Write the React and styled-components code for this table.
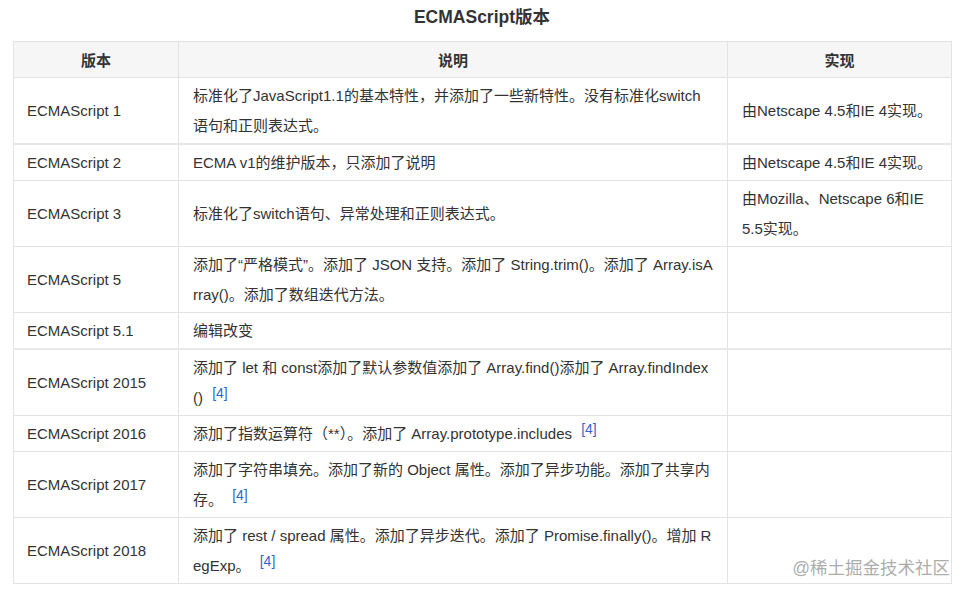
import styled, { createGlobalStyle } from "styled-components";

const GlobalStyle = createGlobalStyle`
  html, body {
    margin: 0;
    padding: 0;
    background: #fff;
  }
  body {
    font-family: "Liberation Sans", Arial, "Noto Sans CJK SC", sans-serif;
    color: #333;
  }
`;

const rows = [
  {
    version: "ECMAScript 1",
    desc: ["标准化了JavaScript1.1的基本特性，并添加了一些新特性。没有标准化switch", "语句和正则表达式。"],
    impl: ["由Netscape 4.5和IE 4实现。"],
  },
  {
    version: "ECMAScript 2",
    desc: ["ECMA v1的维护版本，只添加了说明"],
    impl: ["由Netscape 4.5和IE 4实现。"],
    seam: true,
  },
  {
    version: "ECMAScript 3",
    desc: ["标准化了switch语句、异常处理和正则表达式。"],
    impl: ["由Mozilla、Netscape 6和IE", "5.5实现。"],
  },
  {
    version: "ECMAScript 5",
    desc: ["添加了“严格模式”。添加了 JSON 支持。添加了 String.trim()。添加了 Array.isA", "rray()。添加了数组迭代方法。"],
  },
  {
    version: "ECMAScript 5.1",
    desc: ["编辑改变"],
  },
  {
    version: "ECMAScript 2015",
    desc: ["添加了 let 和 const添加了默认参数值添加了 Array.find()添加了 Array.findIndex", "()"],
    note: true,
    seam: true,
  },
  {
    version: "ECMAScript 2016",
    desc: ["添加了指数运算符（**）。添加了 Array.prototype.includes"],
    note: true,
  },
  {
    version: "ECMAScript 2017",
    desc: ["添加了字符串填充。添加了新的 Object 属性。添加了异步功能。添加了共享内", "存。"],
    note: true,
  },
  {
    version: "ECMAScript 2018",
    desc: ["添加了 rest / spread 属性。添加了异步迭代。添加了 Promise.finally()。增加 R", "egExp。"],
    note: true,
  },
];

function Lines({ lines, note }) {
  return lines.map((line, i) => (
    <span key={i}>
      {i > 0 && <br />}
      {line}
      {note && i === lines.length - 1 && (
        <>
          {" "}
          <Ref>[4]</Ref>
        </>
      )}
    </span>
  ));
}

export default function App() {
  return (
    <>
      <GlobalStyle />
      <Page>
        <Title>ECMAScript版本</Title>
        <Table>
          <colgroup>
            <col style={{ width: 165 }} />
            <col style={{ width: 549 }} />
            <col style={{ width: 224 }} />
          </colgroup>
          <thead>
            <tr>
              <Th>版本</Th>
              <Th>说明</Th>
              <Th>实现</Th>
            </tr>
          </thead>
          <tbody>
            {rows.map((r) => (
              <Row key={r.version} $seam={r.seam}>
                <Td>{r.version}</Td>
                <Td>
                  <Lines lines={r.desc} note={r.note} />
                </Td>
                <Td>{r.impl && <Lines lines={r.impl} />}</Td>
              </Row>
            ))}
          </tbody>
        </Table>
        <Watermark>@稀土掘金技术社区</Watermark>
      </Page>
    </>
  );
}

const Page = styled.div`
  position: relative;
  width: 968px;
  height: 595px;
  padding: 0 17px 0 13px;
  box-sizing: border-box;
  overflow: hidden;
`;

const Title = styled.h3`
  margin: 0;
  height: 41px;
  line-height: 34px;
  text-align: center;
  font-size: 17.5px;
  font-weight: bold;
  color: #333;
`;

const Table = styled.table`
  width: 938px;
  border-collapse: collapse;
  table-layout: fixed;
  font-size: 15px;
  border: 1px solid #e3e3e3;
`;

const Th = styled.th`
  height: 35px;
  padding: 0 14px;
  background: #f6f6f6;
  border: 1px solid #e3e3e3;
  font-weight: bold;
  font-size: 15px;
  color: #333;
  text-align: center;
  vertical-align: middle;
`;

const Row = styled.tr`
  border-top: ${(p) => (p.$seam ? "2px solid #e8e8e8" : "1px solid #e3e3e3")};
`;

const Td = styled.td`
  padding: 3px 14px 2px 14px;
  line-height: 30px;
  border-left: 1px solid #e3e3e3;
  border-right: 1px solid #e3e3e3;
  vertical-align: middle;
  color: #333;
  white-space: nowrap;
  overflow: hidden;

  &:first-child {
    padding-left: 13px;
  }
`;

const Ref = styled.span`
  color: #3366cc;
  font-size: 14px;
  line-height: 0;
  position: relative;
  top: -5px;
  margin-left: 5px;
`;

const Watermark = styled.div`
  position: absolute;
  right: 18px;
  top: 554px;
  font-size: 17.5px;
  color: rgba(150, 150, 150, 0.8);
`;
